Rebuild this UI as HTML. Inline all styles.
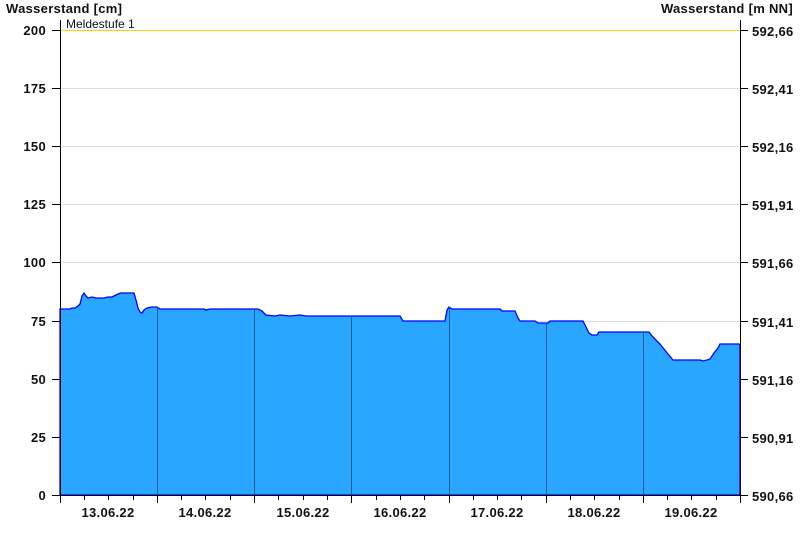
<!DOCTYPE html>
<html><head><meta charset="utf-8"><style>
body{margin:0;background:#fff;width:800px;height:550px;overflow:hidden}
svg text{font-family:"Liberation Sans",Arial,sans-serif;font-size:13px;font-weight:bold;fill:#111;letter-spacing:0.3px}
</style></head><body>
<svg width="800" height="550" viewBox="0 0 800 550" xmlns="http://www.w3.org/2000/svg">
<text x="6" y="13">Wasserstand [cm]</text>
<text x="793" y="13" text-anchor="end">Wasserstand [m NN]</text>
<g stroke="#dcdcdc" stroke-width="1">
<line x1="60" y1="88.5" x2="740" y2="88.5"/><line x1="60" y1="146.5" x2="740" y2="146.5"/>
<line x1="60" y1="204.5" x2="740" y2="204.5"/><line x1="60" y1="262.5" x2="740" y2="262.5"/>
<line x1="60" y1="321.5" x2="740" y2="321.5"/><line x1="60" y1="379.5" x2="740" y2="379.5"/>
<line x1="60" y1="437.5" x2="740" y2="437.5"/>
</g>
<line x1="60" y1="30.5" x2="740" y2="30.5" stroke="#ffcc22" stroke-width="1"/>
<text x="66" y="28" style="font-weight:normal;font-size:12px;letter-spacing:0">Meldestufe 1</text>
<polygon fill="#29a6ff" stroke="#0000ff" stroke-width="1.3" points="60,495 60,309 70,309 72,308 75,308 78,306 80,304 82,296 84,293 86,296 88,298 92,297 96,298 100,298 104,298 108,297 112,297 116,295 118,294 121,293 134,293 136,300 138,308 140,312 142,313 144,310 147,308 152,307 157,307 160,309 204,309 206,310 210,309 258,309 262,311 266,315 275,316 280,315 290,316 300,315 306,316 400,316 403,321 445,321 447,310 449,307 452,309 500,309 502,311 515,311 518,318 520,321 535,321 538,323 548,323 550,321 583,321 586,327 589,333 592,335 597,335 599,332 649,332 652,336 660,344 668,354 673,360 700,360 703,361 707,360 710,359 714,353 718,348 720,344 740,344 740,495"/>
<g stroke="#1a5a8a" stroke-width="1">
<line x1="157.5" y1="307" x2="157.5" y2="495"/><line x1="254.5" y1="309" x2="254.5" y2="495"/>
<line x1="351.5" y1="316" x2="351.5" y2="495"/><line x1="449.5" y1="307" x2="449.5" y2="495"/>
<line x1="546.5" y1="323" x2="546.5" y2="495"/><line x1="643.5" y1="332" x2="643.5" y2="495"/>
</g>
<g stroke="#000" stroke-width="1">
<line x1="60.5" y1="20" x2="60.5" y2="503"/>
<line x1="740.5" y1="20" x2="740.5" y2="503"/>
<line x1="60" y1="495.5" x2="741" y2="495.5"/>
<path d="M52 30.5H60M52 88.5H60M52 146.5H60M52 204.5H60M52 262.5H60M52 321.5H60M52 379.5H60M52 437.5H60M52 495.5H60"/>
<path d="M740 30.5H748M740 88.5H748M740 146.5H748M740 204.5H748M740 262.5H748M740 321.5H748M740 379.5H748M740 437.5H748M740 495.5H748"/>
<path d="M157.5 495V503M254.5 495V503M351.5 495V503M449.5 495V503M546.5 495V503M643.5 495V503"/>
<path d="M84.5 495V500M108.5 495V500M133.5 495V500M181.5 495V500M205.5 495V500M230.5 495V500M278.5 495V500M303.5 495V500M327.5 495V500M376.5 495V500M400.5 495V500M424.5 495V500M473.5 495V500M497.5 495V500M521.5 495V500M570.5 495V500M594.5 495V500M619.5 495V500M667.5 495V500M691.5 495V500M716.5 495V500"/>
</g>
<g text-anchor="end">
<text x="46" y="35">200</text><text x="46" y="93">175</text><text x="46" y="151">150</text>
<text x="46" y="209">125</text><text x="46" y="267">100</text><text x="46" y="326">75</text>
<text x="46" y="384">50</text><text x="46" y="442">25</text><text x="46" y="500">0</text>
</g>
<g>
<text x="752" y="36">592,66</text><text x="752" y="94">592,41</text><text x="752" y="152">592,16</text>
<text x="752" y="210">591,91</text><text x="752" y="268">591,66</text><text x="752" y="327">591,41</text>
<text x="752" y="385">591,16</text><text x="752" y="443">590,91</text><text x="752" y="501">590,66</text>
</g>
<g text-anchor="middle" style="letter-spacing:0.8px">
<text x="108" y="517">13.06.22</text><text x="205" y="517">14.06.22</text><text x="303" y="517">15.06.22</text>
<text x="400" y="517">16.06.22</text><text x="497" y="517">17.06.22</text><text x="594" y="517">18.06.22</text>
<text x="691" y="517">19.06.22</text>
</g>
</svg>
</body></html>
